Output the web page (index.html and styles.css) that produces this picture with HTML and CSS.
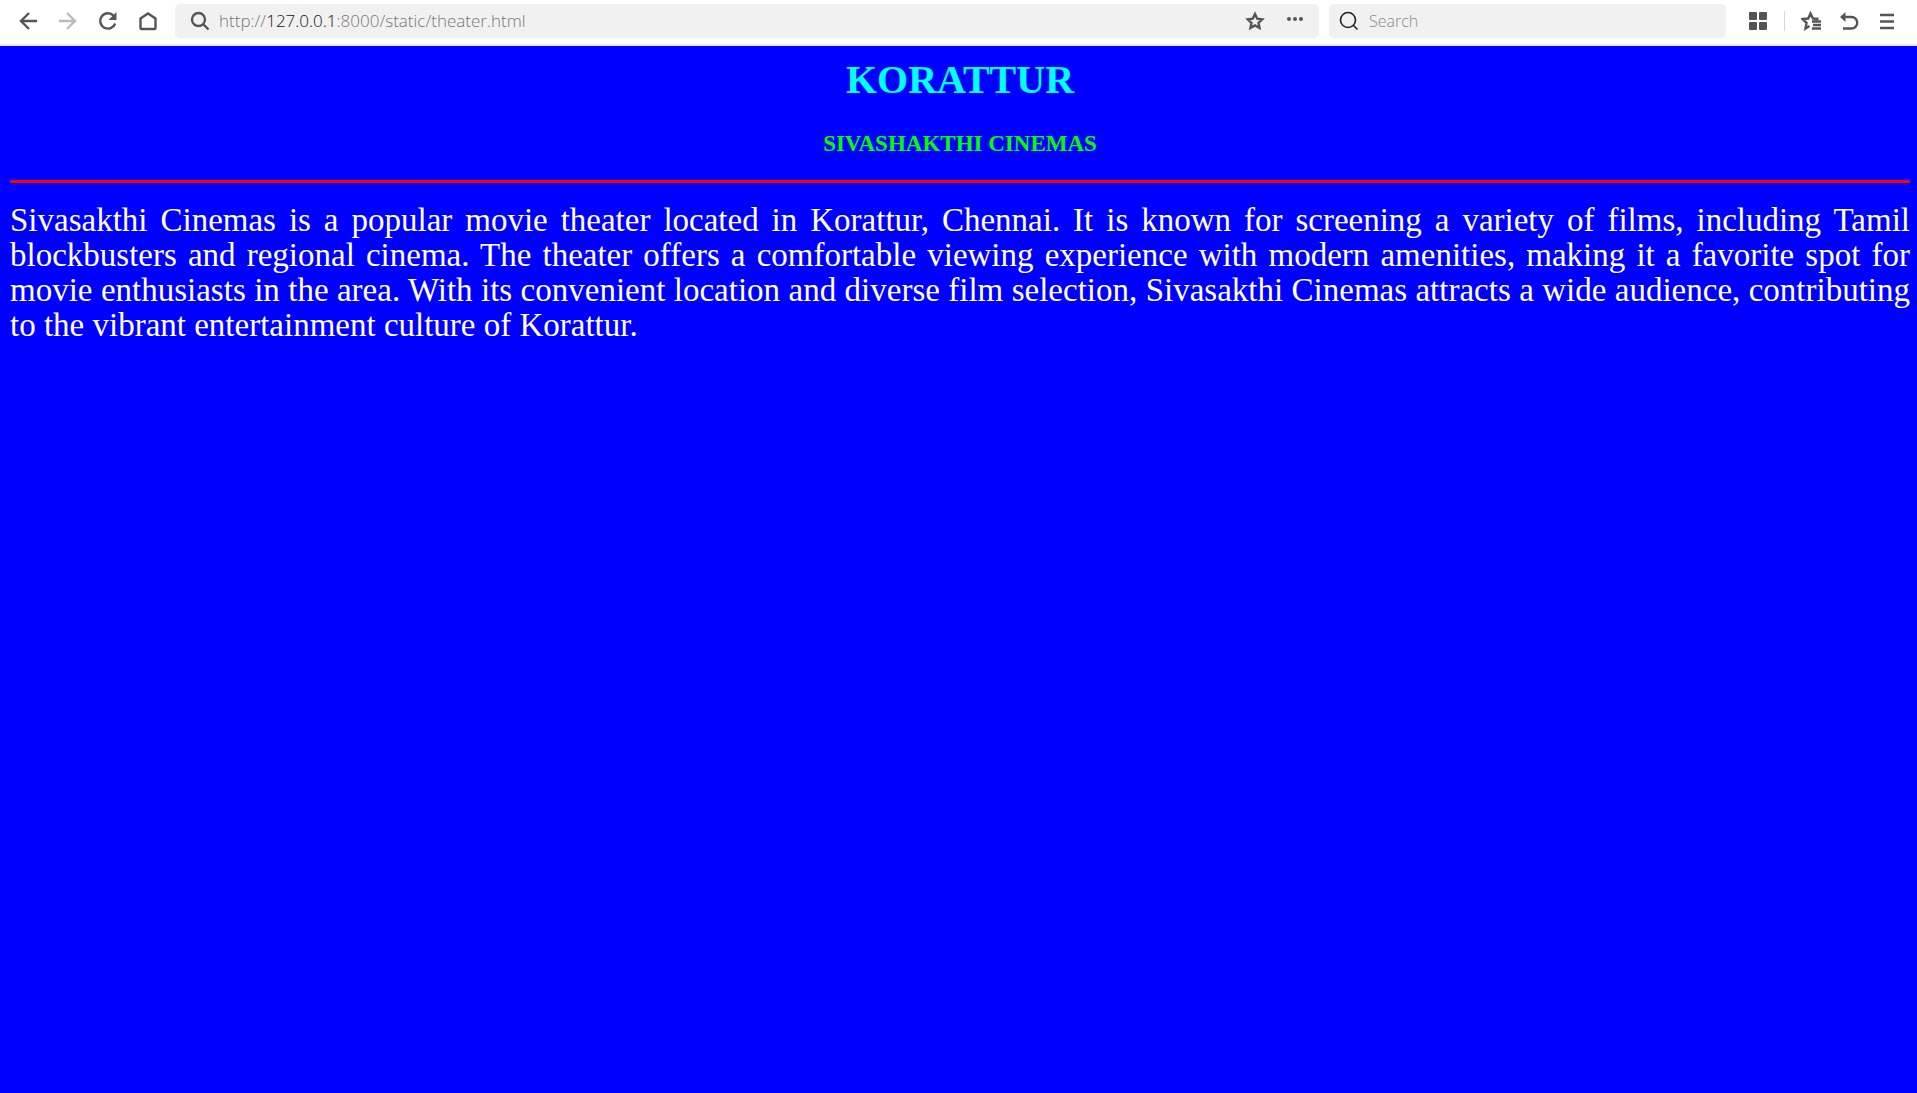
FILE: index.html
```html
<!DOCTYPE html>
<html lang="en">
<head>
<meta charset="utf-8">
<title>Sivashakthi Cinemas</title>
<link rel="stylesheet" href="styles.css">
</head>
<body>
<header class="toolbar">
  <nav class="nav-buttons" aria-label="Navigation">
    <button class="icon-button" type="button" aria-label="Back"><svg viewBox="0 0 20 20"><path d="M11 2 3 10l8 8M3 10h16"/></svg></button>
    <button class="icon-button faded" type="button" aria-label="Forward"><svg viewBox="0 0 20 20"><path d="m9 2 8 8-8 8M17 10H1"/></svg></button>
    <button class="icon-button" type="button" aria-label="Reload"><svg viewBox="0 0 20 20"><path d="M17.200 12.500A7.700 7.700 0 1 1 15.500 4.600"/><path class="solid" d="M18.500 1v8h-8z"/></svg></button>
    <button class="icon-button" type="button" aria-label="Home"><svg viewBox="0 0 20 20"><path d="M2.500 7.500 10 2.500l7.500 5V17q0 1-1 1h-13q-1 0-1-1z"/></svg></button>
  </nav>
  <div class="field address">
    <svg class="field-icon" viewBox="0 0 20 20"><circle cx="8.500" cy="8.500" r="6.500"/><path d="m13.500 13.500 5 5"/></svg>
    <div class="address-text">
      <input class="text-input" id="address" type="text" aria-label="Address">
      <label class="url" for="address">http://<span class="url-host">127.0.0.1</span>:8000/static/theater.html</label>
    </div>
    <button class="icon-button" type="button" aria-label="Bookmark"><svg viewBox="0 0 20 20"><path d="m10 3 2.200 4.700 5 .6-3.700 3.500 1 5.200-4.500-2.600L5.500 17l1-5.200-3.700-3.500 5-.6z"/></svg></button>
    <button class="icon-button" type="button" aria-label="More"><svg viewBox="0 0 20 20"><g class="solid"><circle cx="4" cy="8" r="2"/><circle cx="10" cy="8" r="2"/><circle cx="16" cy="8" r="2"/></g></svg></button>
  </div>
  <div class="field search">
    <svg class="field-icon thin" viewBox="0 0 20 20"><circle cx="9" cy="9" r="7.500"/><path d="m14.500 14.500 4 4"/></svg>
    <input class="text-input" type="search" placeholder="Search" aria-label="Search">
  </div>
  <div class="tools">
    <button class="icon-button" type="button" aria-label="Apps"><svg viewBox="0 0 20 20"><g class="solid"><rect x="1" y="1" width="8" height="8" rx="1"/><rect x="11" y="1" width="8" height="8" rx="1"/><rect x="1" y="11" width="8" height="8" rx="1"/><rect x="11" y="11" width="8" height="8" rx="1"/></g></svg></button>
    <span class="divider"></span>
    <button class="icon-button" type="button" aria-label="Favorites"><svg viewBox="0 0 20 20"><path d="M17.500 8 12 7.500 9.500 2.500 7.200 7.500 1.500 8l4 3.800L4.500 17.500l4-2.500M11 10.500h9M12 14h8M11 17.500h9"/></svg></button>
    <button class="icon-button" type="button" aria-label="Undo"><svg viewBox="0 0 20 20"><path d="M4 6h8.500a5.500 5.500 0 0 1 0 11.500H4"/><path class="solid" d="M1 6 6.500 1v10z"/></svg></button>
    <button class="icon-button" type="button" aria-label="Menu"><svg viewBox="0 0 20 20"><path d="M3 4h14M3 10.500h14M3 17h14"/></svg></button>
  </div>
</header>
<main class="page">
  <h1 class="title">KORATTUR</h1>
  <h2 class="subtitle">SIVASHAKTHI CINEMAS</h2>
  <hr class="rule">
  <p class="description">Sivasakthi Cinemas is a popular movie theater located in Korattur, Chennai. It is known for screening a variety of films, including Tamil blockbusters and regional cinema. The theater offers a comfortable viewing experience with modern amenities, making it a favorite spot for movie enthusiasts in the area. With its convenient location and diverse film selection, Sivasakthi Cinemas attracts a wide audience, contributing to the vibrant entertainment culture of Korattur.</p>
</main>
</body>
</html>
```
FILE: styles.css
```css
* {
  box-sizing: border-box;
}

body {
  margin: 0;
  min-height: 100vh;
  background: #0000ff;
  font-family: "Liberation Serif", serif;
}

.toolbar {
  display: flex;
  align-items: center;
  padding: 4px 18px 6px 16px;
  background: #ffffff;
  border-bottom: 2px solid #e6e8e8;
}

.nav-buttons {
  display: flex;
  gap: 16px;
  padding: 0 15px 0 0;
}

.icon-button {
  display: flex;
  align-items: center;
  justify-content: center;
  width: 24px;
  height: 24px;
  padding: 0;
  border: 0;
  background: none;
  color: #555555;
}

.faded {
  color: #bbbbbb;
}

svg {
  width: 20px;
  height: 20px;
  fill: none;
  stroke: currentColor;
  stroke-width: 2.4;
  flex: none;
}

.solid {
  fill: currentColor;
  stroke: none;
}

.field {
  display: flex;
  align-items: center;
  height: 34px;
  border-radius: 5px;
  background: #f1f1f1;
  font: 300 17px/24px "Open Sans", sans-serif;
}

.field-icon {
  color: #555555;
}

.field-icon.thin {
  color: #222222;
  stroke-width: 1.6;
}

.address {
  flex: 1;
  gap: 16px;
  padding: 0 12px 0 15px;
  margin-right: 10px;
}

.address-text {
  display: grid;
  flex: 1;
  margin-left: -7px;
}

.address-text > * {
  grid-area: 1 / 1;
}

.url {
  color: #777777;
  cursor: text;
}

.url-host {
  color: #111111;
}

.text-input {
  width: 100%;
  min-width: 0;
  padding: 0;
  border: 0;
  outline: 0;
  background: none;
  font: inherit;
}

.text-input::placeholder {
  color: #8a8a8a;
  opacity: 1;
}

.search {
  width: 397px;
  gap: 10px;
  padding: 0 10px;
  margin-right: 20px;
  font-size: 16px;
}

.tools {
  display: flex;
  align-items: center;
  gap: 14px;
}

.divider {
  width: 1px;
  height: 20px;
  background: #d5d5d5;
}

.page {
  padding: 11px 7px 20px 10px;
}

.title {
  margin: 0;
  color: #00ffff;
  font-size: 40px;
  line-height: 46px;
  text-align: center;
}

.subtitle {
  margin: 27px 0 23px;
  color: #00ff00;
  font-size: 23px;
  line-height: 27px;
  text-align: center;
}

.rule {
  height: 3px;
  margin: 0 0 20px;
  border: 0;
  background: #ff0000;
}

.description {
  margin: 0;
  color: #ffffff;
  font-size: 33px;
  line-height: 35px;
  text-align: justify;
}
```
